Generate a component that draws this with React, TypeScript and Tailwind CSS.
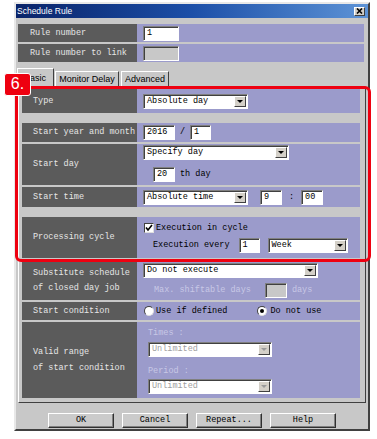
import React from "react";

const mono = "font-['Liberation_Mono','Courier_New',monospace] text-[8.5px] leading-none";
const sans = "font-['Liberation_Sans',Arial,sans-serif]";

function Arrow({ disabled }: { disabled?: boolean }) {
  return (
    <div className="ml-auto mr-[1px] w-[12px] h-[11px] shrink-0 bg-[#d4d0c8] border border-t-white border-l-white border-b-[#404040] border-r-[#404040] flex items-center justify-center">
      <div
        className={
          disabled
            ? "w-0 h-0 border-l-[3px] border-r-[3px] border-t-[3px] border-l-transparent border-r-transparent border-t-[#9a9a9a]"
            : "w-0 h-0 border-l-[3px] border-r-[3px] border-t-[3px] border-l-transparent border-r-transparent border-t-black"
        }
      />
    </div>
  );
}

function Field({ w, text, disabled, gray }: { w: string; text?: string; disabled?: boolean; gray?: boolean }) {
  return (
    <div
      className={`${w} h-[15px] shrink-0 ${gray ? "bg-[#c8c8c8]" : "bg-white"} border border-t-[#808080] border-l-[#808080] border-b-white border-r-white shadow-[inset_1px_1px_0_#404040] pl-[3px] flex items-center ${disabled ? "text-[#9a9a9a]" : "text-black"}`}
    >
      {text}
    </div>
  );
}

function Select({ w, text, disabled }: { w: string; text: string; disabled?: boolean }) {
  return (
    <div
      className={`${w} h-[15px] shrink-0 bg-white border border-t-[#808080] border-l-[#808080] border-b-white border-r-white shadow-[inset_1px_1px_0_#404040] pl-[3px] flex items-center ${disabled ? "text-[#a0a0a0]" : "text-black"}`}
    >
      <span>{text}</span>
      <Arrow disabled={disabled} />
    </div>
  );
}

function Label({ children, w }: { children: React.ReactNode; w: string }) {
  return (
    <div className={`${w} shrink-0 bg-[#5b5b5b] text-[#e6e6e6] flex items-center`}>
      {children}
    </div>
  );
}

function Btn({ text }: { text: string }) {
  return (
    <div className="w-[66px] h-[15px] bg-[#cbcbcb] border border-t-white border-l-white border-b-[#303030] border-r-[#303030] shadow-[inset_-1px_-1px_0_#808080] flex items-center justify-center text-black">
      {text}
    </div>
  );
}

function Radio({ on }: { on?: boolean }) {
  return (
    <div className="w-[10px] h-[10px] rounded-full bg-white border border-t-[#404040] border-l-[#404040] border-b-[#e0e0e0] border-r-[#e0e0e0] flex items-center justify-center shrink-0">
      {on && <div className="w-[4px] h-[4px] rounded-full bg-black" />}
    </div>
  );
}

export default function App() {
  return (
    <div className={`w-[377px] h-[439px] bg-white relative overflow-hidden ${mono}`}>
      <div className="ml-[14px] mt-[2px] w-[356px] h-[429px] bg-[#c8c8c8] border-2 border-t-[#e8e8e8] border-l-[#e8e8e8] border-b-[#404040] border-r-[#404040] flex flex-col">
        {/* title bar */}
        <div className="h-[14px] bg-gradient-to-r from-[#0a246a] via-[#1c4fa8] to-[#5d93d6] flex items-center pl-[1px] pr-[3px]">
          <span className={`${sans} text-[8.5px] text-white`}>Schedule Rule</span>
          <div className="ml-auto w-[11px] h-[9px] bg-[#d4d0c8] border border-t-white border-l-white border-b-[#404040] border-r-[#404040] flex items-center justify-center">
            <svg width="7" height="6" viewBox="0 0 7 6">
              <path d="M1 0.5 L6 5.5 M6 0.5 L1 5.5" stroke="#000" strokeWidth="1.6" />
            </svg>
          </div>
        </div>

        {/* top rows */}
        <div className="mt-[6px] ml-[2px] mr-[4px] flex flex-col gap-[2px]">
          <div className="flex h-[18px]">
            <Label w="w-[119px] pl-[12px]">Rule number</Label>
            <div className="flex-1 bg-[#9b9bcb] pl-[6px] flex items-center">
              <Field w="w-[36px]" text="1" />
            </div>
          </div>
          <div className="flex h-[18px]">
            <Label w="w-[119px] pl-[12px]">Rule number to link</Label>
            <div className="flex-1 bg-[#9b9bcb] pl-[6px] flex items-center">
              <Field w="w-[36px]" gray />
            </div>
          </div>
        </div>

        {/* tabs */}
        <div className={`${sans} text-[9px] mt-[6px] ml-[1px] flex items-end h-[18px]`}>
          <div className="w-[37px] h-[19px] -mb-[1px] bg-[#c8c8c8] border border-b-0 border-t-white border-l-white border-r-[#404040] flex items-center pl-[6px] relative z-10">
            Basic
          </div>
          <div className="ml-[1px] w-[64px] h-[15px] bg-[#c8c8c8] border border-b-0 border-t-white border-l-white border-r-[#404040] flex items-center justify-center">
            Monitor Delay
          </div>
          <div className="ml-[2px] w-[48px] h-[15px] bg-[#c8c8c8] border border-b-0 border-t-white border-l-white border-r-[#404040] flex items-center justify-center">
            Advanced
          </div>
        </div>

        {/* panel */}
        <div className="mx-[2px] h-[317px] border border-t-white border-l-white border-b-[#404040] border-r-[#404040] pt-[2px] pl-[3px] pr-[5px] flex flex-col">
          {/* Type */}
          <div className="flex h-[24px]">
            <Label w="w-[115px] pl-[11px]">Type</Label>
            <div className="flex-1 bg-[#9b9bcb] pl-[6px] flex items-center">
              <Select w="w-[105px]" text="Absolute day" />
            </div>
          </div>
          {/* Start year and month */}
          <div className="flex h-[19px] mt-[10px]">
            <Label w="w-[115px] pl-[11px]">Start year and month</Label>
            <div className="flex-1 bg-[#9b9bcb] pl-[6px] flex items-center text-black">
              <Field w="w-[32px]" text="2016" />
              <span className="mx-[5px]">/</span>
              <Field w="w-[21px]" text="1" />
            </div>
          </div>
          {/* Start day */}
          <div className="flex h-[41px] mt-[2px]">
            <Label w="w-[115px] pl-[11px]">Start day</Label>
            <div className="flex-1 bg-[#9b9bcb] pl-[6px] pt-[1px] flex flex-col text-black">
              <Select w="w-[146px]" text="Specify day" />
              <div className="mt-[7px] ml-[10px] flex items-center">
                <Field w="w-[22px]" text="20" />
                <span className="ml-[5px]">th day</span>
              </div>
            </div>
          </div>
          {/* Start time */}
          <div className="flex h-[20px] mt-[2px]">
            <Label w="w-[115px] pl-[11px]">Start time</Label>
            <div className="flex-1 bg-[#9b9bcb] pl-[6px] flex items-center text-black">
              <Select w="w-[105px]" text="Absolute time" />
              <div className="ml-[12px]">
                <Field w="w-[22px]" text="9" />
              </div>
              <span className="mx-[7px]">:</span>
              <Field w="w-[22px]" text="00" />
            </div>
          </div>
          {/* Processing cycle */}
          <div className="flex h-[41px] mt-[10px]">
            <Label w="w-[115px] pl-[11px]">Processing cycle</Label>
            <div className="flex-1 bg-[#9b9bcb] pl-[7px] pt-[4px] flex flex-col text-black">
              <div className="h-[14px] flex items-center">
                <div className="w-[10px] h-[10px] bg-white border border-t-[#404040] border-l-[#404040] border-b-[#e0e0e0] border-r-[#e0e0e0] flex items-center justify-center">
                  <svg width="8" height="8" viewBox="0 0 8 8">
                    <path d="M1 3.5 L3 6 L7 1" stroke="#000" strokeWidth="1.6" fill="none" />
                  </svg>
                </div>
                <span className="ml-[2px]">Execution in cycle</span>
              </div>
              <div className="mt-[2px] ml-[9px] h-[16px] flex items-center">
                <span>Execution every</span>
                <div className="ml-[9px]">
                  <Field w="w-[21px]" text="1" />
                </div>
                <div className="ml-[8px]">
                  <Select w="w-[80px]" text="Week" />
                </div>
              </div>
            </div>
          </div>
          {/* Substitute schedule */}
          <div className="flex h-[38px] mt-[4px]">
            <Label w="w-[115px] pl-[11px]">
              <div className="leading-[15px]">
                Substitute schedule
                <br />
                of closed day job
              </div>
            </Label>
            <div className="flex-1 bg-[#9b9bcb] pl-[6px] pt-[1px] flex flex-col">
              <Select w="w-[175px]" text="Do not execute" />
              <div className="mt-[5px] ml-[11px] flex items-center">
                <span className="text-[#c8c8e6]">Max. shiftable days</span>
                <div className="ml-[14px]">
                  <Field w="w-[22px]" gray />
                </div>
                <span className="ml-[5px] text-[#c8c8e6]">days</span>
              </div>
            </div>
          </div>
          {/* Start condition */}
          <div className="flex h-[18px] mt-[2px]">
            <Label w="w-[115px] pl-[11px]">Start condition</Label>
            <div className="flex-1 bg-[#9b9bcb] pl-[7px] flex items-center text-black">
              <Radio />
              <span className="ml-[2px]">Use if defined</span>
              <div className="ml-[30px]">
                <Radio on />
              </div>
              <span className="ml-[3px]">Do not use</span>
            </div>
          </div>
          {/* Valid range */}
          <div className="flex h-[76px] mt-[2px]">
            <Label w="w-[115px] pl-[11px]">
              <div className="leading-[16px]">
                Valid range
                <br />
                of start condition
              </div>
            </Label>
            <div className="flex-1 bg-[#9b9bcb] pl-[11px] pt-[7px] flex flex-col">
              <span className="text-[#c8c8e6] h-[9px]">Times :</span>
              <div className="mt-[4px]">
                <Select w="w-[124px]" text="Unlimited" disabled />
              </div>
              <span className="mt-[10px] text-[#c8c8e6] h-[9px]">Period :</span>
              <div className="mt-[3px]">
                <Select w="w-[124px]" text="Unlimited" disabled />
              </div>
            </div>
          </div>
        </div>

        {/* buttons */}
        <div className="mt-[10px] ml-[32px] flex gap-[8px]">
          <Btn text="OK" />
          <Btn text="Cancel" />
          <Btn text="Repeat..." />
          <Btn text="Help" />
        </div>
      </div>

      {/* annotation: red box */}
      <div className="absolute z-20 left-[15px] top-[86px] w-[356px] h-[176px] border-[3px] border-[#ee0010] rounded-[6px] pointer-events-none" />
      <div className={`absolute z-30 left-[4px] top-[73px] w-[27px] h-[23px] bg-[#ee0010] rounded-[3px] border border-white flex items-center justify-center text-white text-[16px] leading-none pb-[1px] ${sans}`}>
        6.
      </div>
    </div>
  );
}
